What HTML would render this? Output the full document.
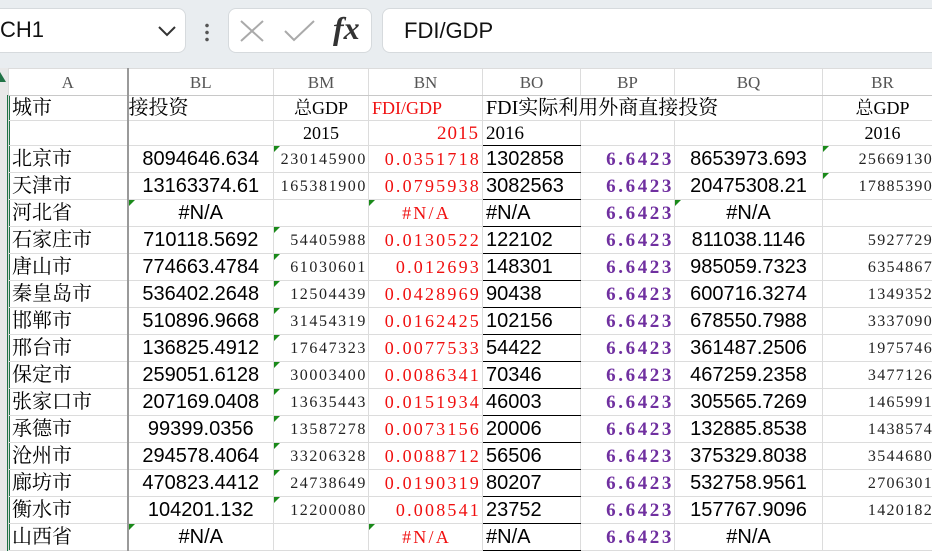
<!DOCTYPE html>
<html><head><meta charset="utf-8"><style>
*{margin:0;padding:0;box-sizing:border-box}
body{width:932px;height:551px;overflow:hidden;background:#fff;position:relative;font-family:"Liberation Serif","Noto Serif CJK SC",serif}
.top{position:absolute;left:0;top:0;width:932px;height:68px;background:#e9edf0}
.box{position:absolute;top:8px;height:45px;background:#fff;border:1px solid #d6dadd;border-radius:8px}
.sans{font-family:"Liberation Sans","Noto Sans CJK SC",sans-serif}
table{position:absolute;left:8px;top:68px;width:934px;border-collapse:collapse;table-layout:fixed}
td{border:1px solid #dcdcdc;height:27px;padding:0 3px;white-space:nowrap;overflow:hidden;font-size:20px;position:relative;line-height:25px}
tr.s td{height:25px;line-height:23px}
tr.h td{background:#fff;color:#555;text-align:center;font-size:17px;border-bottom:1px solid #c8c8c8}
.bl{border-left:2px solid #9a9a9a}
.c{text-align:center}.r{text-align:right}
.n{font-family:"Liberation Sans",sans-serif;font-size:20px}
.m{font-size:16px;color:#222;letter-spacing:1.6px;padding-right:1px}
.br{padding-right:9px;letter-spacing:1.3px}
.red{color:#f01010;font-size:18px;letter-spacing:2.2px;padding-right:1px}
.p{color:#7030a0;font-size:19px;font-weight:bold;text-align:right;letter-spacing:2.6px;padding-right:0}
.bo{border-bottom:1px solid #000}
.t::before{content:"";position:absolute;left:0;top:0;border-top:6px solid #1a8a1a;border-right:6px solid transparent}
</style></head><body>
<div class="top">
<div class="box" style="left:-10px;width:196px"></div>
<div class="sans" style="position:absolute;left:0;top:17px;font-size:22px;color:#111">CH1</div>
<svg style="position:absolute;left:157px;top:24px" width="20" height="14"><path d="M2 3 L10 11 L18 3" stroke="#333" stroke-width="2" fill="none"/></svg>
<div style="position:absolute;left:205px;top:22px;width:4px;height:20px;background:radial-gradient(circle,#555 1.6px,transparent 2px) 0 0/4px 7px"></div>
<div class="box" style="left:228px;width:144px"></div>
<svg style="position:absolute;left:238px;top:18px" width="30" height="26"><path d="M3 3 L25 23 M25 3 L3 23" stroke="#aaa" stroke-width="2"/></svg>
<svg style="position:absolute;left:283px;top:18px" width="34" height="26"><path d="M2 13 L11 22 L31 3" stroke="#aaa" stroke-width="2" fill="none"/></svg>
<div style="position:absolute;left:333px;top:10px;font-size:32px;font-style:italic;font-weight:bold;color:#333">fx</div>
<div class="box" style="left:382px;width:560px"></div>
<div class="sans" style="position:absolute;left:404px;top:18px;font-size:22px;color:#111">FDI/GDP</div>
</div>
<div style="position:absolute;left:0;top:68px;width:8px;height:483px;background:#e8e8e8"></div>
<div style="position:absolute;left:7px;top:95px;width:3px;height:456px;background:#217346"></div>
<div style="position:absolute;left:0;top:72px;border-bottom:10px solid #217346;border-right:6px solid transparent"></div>
<table>
<colgroup><col style="width:119px"><col style="width:146px"><col style="width:95px"><col style="width:114px"><col style="width:98px"><col style="width:94px"><col style="width:148px"><col style="width:120px"></colgroup>
<tr class="h"><td>A</td><td class="bl">BL</td><td>BM</td><td>BN</td><td>BO</td><td>BP</td><td>BQ</td><td>BR</td></tr>
<tr class="s"><td>城市</td><td class="bl" style="padding:0">接投资</td><td class="c" style="font-size:18px">总GDP</td><td style="color:#f01010;font-size:18px">FDI/GDP</td><td colspan="3" style="font-size:20px">FDI实际利用外商直接投资</td><td class="c" style="font-size:18px">总GDP</td></tr>
<tr class="s"><td></td><td class="bl"></td><td class="c" style="font-size:18px">2015</td><td class="r" style="color:#f01010;font-size:19px;letter-spacing:1px">2015</td><td class="bo" style="font-size:19px">2016</td><td></td><td></td><td class="c" style="font-size:18px">2016</td></tr>
<tr><td>北京市</td><td class="bl c n">8094646.634</td><td class="r m t">230145900</td><td class="r red">0.0351718</td><td class="bo n">1302858</td><td class="p">6.6423</td><td class="c n">8653973.693</td><td class="r m br t">25669130</td></tr>
<tr><td>天津市</td><td class="bl c n">13163374.61</td><td class="r m">165381900</td><td class="r red">0.0795938</td><td class="bo n">3082563</td><td class="p">6.6423</td><td class="c n">20475308.21</td><td class="r m br t">17885390</td></tr>
<tr><td>河北省</td><td class="bl c n t">#N/A</td><td class="m"></td><td class="c red t">#N/A</td><td class="bo n">#N/A</td><td class="p">6.6423</td><td class="c n t">#N/A</td><td></td></tr>
<tr><td>石家庄市</td><td class="bl c n">710118.5692</td><td class="r m t">54405988</td><td class="r red">0.0130522</td><td class="bo n">122102</td><td class="p">6.6423</td><td class="c n">811038.1146</td><td class="r m br">5927729</td></tr>
<tr><td>唐山市</td><td class="bl c n">774663.4784</td><td class="r m t">61030601</td><td class="r red">0.012693</td><td class="bo n">148301</td><td class="p">6.6423</td><td class="c n">985059.7323</td><td class="r m br">6354867</td></tr>
<tr><td>秦皇岛市</td><td class="bl c n">536402.2648</td><td class="r m t">12504439</td><td class="r red">0.0428969</td><td class="bo n">90438</td><td class="p">6.6423</td><td class="c n">600716.3274</td><td class="r m br">1349352</td></tr>
<tr><td>邯郸市</td><td class="bl c n">510896.9668</td><td class="r m t">31454319</td><td class="r red">0.0162425</td><td class="bo n">102156</td><td class="p">6.6423</td><td class="c n">678550.7988</td><td class="r m br">3337090</td></tr>
<tr><td>邢台市</td><td class="bl c n">136825.4912</td><td class="r m t">17647323</td><td class="r red">0.0077533</td><td class="bo n">54422</td><td class="p">6.6423</td><td class="c n">361487.2506</td><td class="r m br">1975746</td></tr>
<tr><td>保定市</td><td class="bl c n">259051.6128</td><td class="r m t">30003400</td><td class="r red">0.0086341</td><td class="bo n">70346</td><td class="p">6.6423</td><td class="c n">467259.2358</td><td class="r m br">3477126</td></tr>
<tr><td>张家口市</td><td class="bl c n">207169.0408</td><td class="r m t">13635443</td><td class="r red">0.0151934</td><td class="bo n">46003</td><td class="p">6.6423</td><td class="c n">305565.7269</td><td class="r m br">1465991</td></tr>
<tr><td>承德市</td><td class="bl c n">99399.0356</td><td class="r m t">13587278</td><td class="r red">0.0073156</td><td class="bo n">20006</td><td class="p">6.6423</td><td class="c n">132885.8538</td><td class="r m br">1438574</td></tr>
<tr><td>沧州市</td><td class="bl c n">294578.4064</td><td class="r m t">33206328</td><td class="r red">0.0088712</td><td class="bo n">56506</td><td class="p">6.6423</td><td class="c n">375329.8038</td><td class="r m br">3544680</td></tr>
<tr><td>廊坊市</td><td class="bl c n">470823.4412</td><td class="r m t">24738649</td><td class="r red">0.0190319</td><td class="bo n">80207</td><td class="p">6.6423</td><td class="c n">532758.9561</td><td class="r m br">2706301</td></tr>
<tr><td>衡水市</td><td class="bl c n">104201.132</td><td class="r m t">12200080</td><td class="r red">0.008541</td><td class="bo n">23752</td><td class="p">6.6423</td><td class="c n">157767.9096</td><td class="r m br">1420182</td></tr>
<tr><td>山西省</td><td class="bl c n t">#N/A</td><td></td><td class="c red t">#N/A</td><td class="bo n">#N/A</td><td class="p">6.6423</td><td class="c n">#N/A</td><td></td></tr>
</table>
</body></html>
